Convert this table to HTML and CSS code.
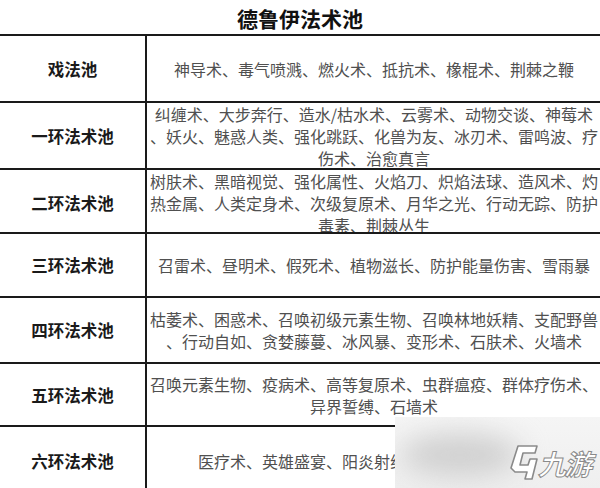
FILE: index.html
```html
<!DOCTYPE html>
<html lang="zh">
<head>
<meta charset="utf-8">
<title>德鲁伊法术池</title>
<link rel="stylesheet" href="styles.css">
</head>
<body>
<div class="page">
  <h1 class="title">德鲁伊法术池</h1>
  <div class="table">
    <div class="row r1">
      <div class="label">戏法池</div>
      <div class="content">神导术、毒气喷溅、燃火术、抵抗术、橡棍术、荆棘之鞭</div>
    </div>
    <div class="row r2">
      <div class="label">一环法术池</div>
      <div class="content">纠缠术、大步奔行、造水/枯水术、云雾术、动物交谈、神莓术<br>、妖火、魅惑人类、强化跳跃、化兽为友、冰刃术、雷鸣波、疗<br>伤术、治愈真言</div>
    </div>
    <div class="row r3">
      <div class="label">二环法术池</div>
      <div class="content">树肤术、黑暗视觉、强化属性、火焰刀、炽焰法球、造风术、灼<br>热金属、人类定身术、次级复原术、月华之光、行动无踪、防护<br>毒素、荆棘丛生</div>
    </div>
    <div class="row r4">
      <div class="label">三环法术池</div>
      <div class="content">召雷术、昼明术、假死术、植物滋长、防护能量伤害、雪雨暴</div>
    </div>
    <div class="row r5">
      <div class="label">四环法术池</div>
      <div class="content">枯萎术、困惑术、召唤初级元素生物、召唤林地妖精、支配野兽<br>、行动自如、贪婪藤蔓、冰风暴、变形术、石肤术、火墙术</div>
    </div>
    <div class="row r6">
      <div class="label">五环法术池</div>
      <div class="content">召唤元素生物、疫病术、高等复原术、虫群瘟疫、群体疗伤术、<br>异界誓缚、石墙术</div>
    </div>
    <div class="row r7">
      <div class="label">六环法术池</div>
      <div class="content">医疗术、英雄盛宴、阳炎射线、虫群召唤、移植术</div>
    </div>
  </div>
  <div class="watermark">
    <div class="blob"></div>
    <div class="logo">
      <svg class="mark" width="32" height="40" viewBox="0 0 32 40">
        <path d="M10 3 L29 3 L27 10 L15 10 L12 22 L20 22 L22 16 L29 16 L24 36 L17 36 L19 29 L7 29 L3 25 Z" fill="#ffffff" stroke="#8a8a8a" stroke-width="1.6" stroke-linejoin="round"/>
      </svg>
      <span class="brand">九游</span>
    </div>
  </div>
</div>
</body>
</html>
```
FILE: styles.css
```css
html, body {
  margin: 0;
  padding: 0;
  background: #ffffff;
}

.page {
  position: relative;
  width: 600px;
  height: 488px;
  overflow: hidden;
  font-family: "Liberation Serif", "Noto Sans CJK SC", serif;
}

.title {
  margin: 0;
  height: 34px;
  line-height: 37px;
  text-align: center;
  font-family: "Noto Sans CJK SC", sans-serif;
  font-size: 21px;
  font-weight: 700;
  color: #111;
}

.table {
  display: flex;
  flex-direction: column;
}

.row {
  display: grid;
  grid-template-columns: 147px 1fr;
  border-top: 2px solid #1a1a1a;
  box-sizing: border-box;
}

.r1 { height: 67px; }
.r2 { height: 67px; }
.r3 { height: 64px; }
.r4 { height: 64px; }
.r5 { height: 66px; }
.r6 { height: 63px; }
.r7 { height: 70px; }

.label {
  display: flex;
  align-items: center;
  justify-content: center;
  border-right: 2px solid #1a1a1a;
  font-family: "Noto Sans CJK SC", sans-serif;
  font-size: 16.5px;
  font-weight: 700;
  color: #1a1a1a;
}

.content {
  display: flex;
  align-items: center;
  justify-content: center;
  text-align: center;
  font-family: "Noto Sans CJK SC", sans-serif;
  font-size: 16px;
  line-height: 22px;
  color: #505050;
  white-space: nowrap;
  padding-left: 1px;
}

.watermark {
  position: absolute;
  left: 395px;
  top: 417px;
  width: 205px;
  height: 71px;
  background: linear-gradient(180deg, #f5f5f5 0%, #efefef 100%);
  overflow: hidden;
}

.blob {
  position: absolute;
  left: 5px;
  top: 16px;
  width: 120px;
  height: 44px;
  border-radius: 50%;
  background: #d0d0d0;
  filter: blur(14px);
}

.logo {
  position: absolute;
  left: 113px;
  top: 26px;
  display: flex;
  align-items: center;
  gap: 1px;
}

.mark {
  display: block;
}

.brand {
  font-family: "Noto Sans CJK SC", sans-serif;
  font-size: 28px;
  font-weight: 700;
  color: #ffffff;
  -webkit-text-stroke: 1px #8a8a8a;
  letter-spacing: -2px;
  transform: skewX(-14deg);
  display: inline-block;
}
```
